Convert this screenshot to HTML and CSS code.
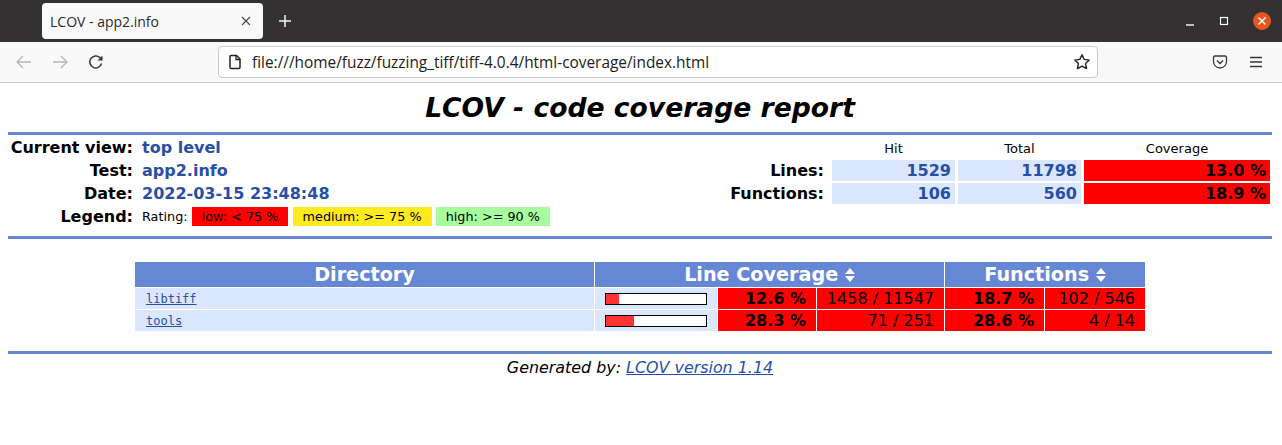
FILE: index.html
```html
<!DOCTYPE html>
<html lang="en">
<head>
    <meta charset="UTF-8">
    <title>LCOV - app2.info</title>
    <link rel="stylesheet" href="styles.css">
</head>
<body>
<div class="tabbar">
    <div class="tab">
        <span class="tab-title">LCOV - app2.info</span>
        <svg class="tab-close" width="10" height="10" viewBox="0 0 10 10"><path d="M1 1l8 8M9 1l-8 8" stroke="#444" stroke-width="1.1" fill="none"/></svg>
    </div>
    <svg class="new-tab" width="14" height="14" viewBox="0 0 14 14"><path d="M7 1v12M1 7h12" stroke="#f5f5f5" stroke-width="1.5" fill="none"/></svg>
    <div class="window-buttons">
        <svg width="10" height="10" viewBox="0 0 10 10"><path d="M1 9h8" stroke="#fff" stroke-width="1.4" fill="none"/></svg>
        <svg width="10" height="10" viewBox="0 0 10 10"><rect x="1.5" y="1.5" width="7" height="7" stroke="#fff" stroke-width="1.2" fill="none"/></svg>
        <div class="close-button">
            <svg width="10" height="10" viewBox="0 0 10 10"><path d="M1.5 1.5l7 7M8.500 1.5l-7 7" stroke="#fff" stroke-width="1.5" fill="none"/></svg>
        </div>
    </div>
</div>
<div class="toolbar">
    <div class="nav-buttons">
        <svg width="18" height="16" viewBox="0 0 18 16"><path d="M16 8H2M8 2L2 8l6 6" stroke="#b5b5b6" stroke-width="1.3" fill="none"/></svg>
        <svg width="18" height="16" viewBox="0 0 18 16"><path d="M2 8h14M10 2l6 6-6 6" stroke="#b5b5b6" stroke-width="1.3" fill="none"/></svg>
        <svg class="reload" width="16" height="16" viewBox="0 0 16 16"><path d="M13.600 9.500A6 6 0 1 1 12 3.600L14 6" stroke="#3a3a3c" stroke-width="1.5" fill="none"/><path d="M14.500 1.500V6.500H9.500z" fill="#3a3a3c"/></svg>
    </div>
    <div class="urlbar">
        <svg width="14" height="16" viewBox="0 0 14 16"><path d="M2 2.500A1 1 0 0 1 3 1.500H8.500L12 5V13.500A1 1 0 0 1 11 14.500H3A1 1 0 0 1 2 13.500Z" stroke="#222" stroke-width="1.5" fill="none"/><path d="M8 1.500V5.500H12" stroke="#222" stroke-width="1.3" fill="none"/></svg>
        <span class="url">file:///home/fuzz/fuzzing_tiff/tiff-4.0.4/html-coverage/index.html</span>
        <svg class="star" width="18" height="18" viewBox="0 0 18 18"><path d="M9 1.800l2.200 4.600 5 .7-3.600 3.500.9 5L9 13.200l-4.500 2.400.9-5L1.800 7.100l5-.7z" stroke="#222" stroke-width="1.4" stroke-linejoin="round" fill="none"/></svg>
    </div>
    <div class="tool-icons">
        <svg width="16" height="16" viewBox="0 0 16 16"><path d="M1.500 3.500A1.500 1.500 0 0 1 3 2H13A1.500 1.500 0 0 1 14.500 3.500V7.500A6.500 6.500 0 0 1 1.500 7.500Z" stroke="#3a3a3c" stroke-width="1.3" fill="none"/><path d="M5 6.500L8 9.500 11 6.500" stroke="#3a3a3c" stroke-width="1.5" fill="none"/></svg>
        <svg width="14" height="12" viewBox="0 0 14 12"><path d="M1 1.500h12M1 6h12M1 10.500h12" stroke="#3a3a3c" stroke-width="1.4" fill="none"/></svg>
    </div>
</div>

<div class="page">
    <h1 class="title">LCOV - code coverage report</h1>
    <div class="ruler"></div>

    <div class="summary">
        <table class="info">
            <tr><td class="head-item">Current view:</td><td class="head-value">top level</td></tr>
            <tr><td class="head-item">Test:</td><td class="head-value">app2.info</td></tr>
            <tr><td class="head-item">Date:</td><td class="head-value">2022-03-15 23:48:48</td></tr>
            <tr>
                <td class="head-item">Legend:</td>
                <td class="legend">
                    Rating:
                    <span class="rate rate-lo">low: &lt; 75 %</span>
                    <span class="rate rate-med">medium: &gt;= 75 %</span>
                    <span class="rate rate-hi">high: &gt;= 90 %</span>
                </td>
            </tr>
        </table>
        <table class="totals">
            <tr><th></th><th>Hit</th><th>Total</th><th>Coverage</th></tr>
            <tr><td class="head-item">Lines:</td><td class="cov-num">1529</td><td class="cov-num">11798</td><td class="cov-pct">13.0 %</td></tr>
            <tr><td class="head-item">Functions:</td><td class="cov-num">106</td><td class="cov-num">560</td><td class="cov-pct">18.9 %</td></tr>
        </table>
    </div>
    <div class="ruler"></div>

    <table class="files">
        <colgroup>
            <col class="col-dir">
            <col class="col-bar">
            <col class="col-pct">
            <col class="col-lines">
            <col class="col-fpct">
            <col class="col-funcs">
        </colgroup>
        <tr>
            <th>Directory</th>
            <th colspan="3">Line Coverage <svg class="sort" width="10" height="14" viewBox="0 0 10 14"><path d="M5 0l5 6H0zM5 14L0 8h10z" fill="#fff"/></svg></th>
            <th colspan="2">Functions <svg class="sort" width="10" height="14" viewBox="0 0 10 14"><path d="M5 0l5 6H0zM5 14L0 8h10z" fill="#fff"/></svg></th>
        </tr>
        <tr>
            <td class="file"><a href="#">libtiff</a></td>
            <td class="bar-cell"><div class="bar"><div class="fill" style="width: 12.6%"></div></div></td>
            <td class="pct">12.6 %</td>
            <td class="num">1458 / 11547</td>
            <td class="pct">18.7 %</td>
            <td class="num">102 / 546</td>
        </tr>
        <tr>
            <td class="file"><a href="#">tools</a></td>
            <td class="bar-cell"><div class="bar"><div class="fill" style="width: 28.3%"></div></div></td>
            <td class="pct">28.3 %</td>
            <td class="num">71 / 251</td>
            <td class="pct">28.6 %</td>
            <td class="num">4 / 14</td>
        </tr>
    </table>

    <div class="ruler ruler-foot"></div>
    <p class="footer">Generated by: <a href="#">LCOV version 1.14</a></p>
</div>
</body>
</html>
```

FILE: styles.css
```css
body {
    margin: 0;
    background-color: #fff;
    color: #000;
    font-family: "DejaVu Sans", sans-serif;
    font-size: 16px;
    overflow: hidden;
}
a {
    color: #284fa8;
}
table {
    border-collapse: separate;
}

/* browser frame */
.tabbar {
    display: flex;
    align-items: center;
    height: 42px;
    padding-left: 42px;
    background-color: #333132;
}
.tab {
    display: flex;
    align-items: center;
    justify-content: space-between;
    box-sizing: border-box;
    width: 221px;
    height: 36px;
    padding: 0 12px 0 8px;
    background-color: #f9f9fa;
    border-radius: 4px;
    font-family: "Open Sans", sans-serif;
    font-size: 14px;
    color: #2a2a2e;
}
.new-tab {
    margin-left: 15px;
}
.window-buttons {
    display: flex;
    align-items: center;
    gap: 24px;
    margin-left: auto;
    padding-right: 11px;
}
.close-button {
    display: flex;
    align-items: center;
    justify-content: center;
    width: 18px;
    height: 18px;
    border-radius: 50%;
    background-color: #e95420;
}
.toolbar {
    display: flex;
    align-items: center;
    box-sizing: border-box;
    height: 41px;
    padding: 0 19px 0 15px;
    background-color: #f9f9fa;
    border-bottom: 1px solid #ccc;
}
.nav-buttons {
    display: flex;
    align-items: center;
    gap: 18px;
    width: 203px;
}
.reload {
    margin-left: 1px;
}
.urlbar {
    display: flex;
    align-items: center;
    box-sizing: border-box;
    width: 880px;
    height: 32px;
    padding: 0 6px 0 9px;
    background-color: #fff;
    border: 1px solid #ccc;
    border-radius: 4px;
}
.url {
    margin-left: 10px;
    font-family: "Open Sans", sans-serif;
    font-size: 15.4px;
    color: #1c1b22;
}
.star {
    margin-left: auto;
}
.tool-icons {
    display: flex;
    align-items: center;
    gap: 21px;
    margin-left: auto;
}

/* report */
.page {
    padding: 0 10px 0 8px;
}
.title {
    margin: 0;
    padding: 8px 0 8px;
    font-size: 26.6px;
    font-style: italic;
    font-weight: bold;
    line-height: 33px;
    text-align: center;
}
.ruler {
    height: 3px;
    background-color: #6688d4;
}
.summary {
    display: flex;
    justify-content: space-between;
    height: 101px;
}
.info, .totals {
    align-self: flex-start;
}
.info {
    border-spacing: 0;
    margin-top: 1px;
}
.info td {
    height: 23px;
    padding: 0;
}
.head-item {
    font-weight: bold;
    text-align: right;
    white-space: nowrap;
}
.info .head-item {
    width: 125px;
    padding-right: 9px;
}
.head-value {
    color: #284fa8;
    font-weight: bold;
}
.legend {
    font-size: 12.8px;
    white-space: nowrap;
}
.rate {
    display: inline-block;
    height: 19px;
    line-height: 19px;
    padding: 0 10px;
}
.rate-lo { background-color: #ff0000; }
.rate-med { background-color: #ffea20; }
.rate-hi { background-color: #a7fc9d; }

.totals {
    border-spacing: 3px 2px;
    margin: 1px -1px 0 0;
}
.totals th {
    width: 123px;
    height: 20px;
    padding: 0;
    font-size: 13px;
    font-weight: normal;
}
.totals th:first-child {
    width: 93px;
}
.totals th:last-child {
    width: 186px;
}
.totals td {
    height: 21px;
    padding: 0 4px 0 0;
}
.totals .head-item {
    padding-right: 5px;
}
.cov-num {
    background-color: #dae7fe;
    color: #284fa8;
    font-weight: bold;
    text-align: right;
}
.cov-pct {
    background-color: #ff0000;
    font-weight: bold;
    text-align: right;
}

.files {
    width: 1012px;
    margin: 22px 0 0 126px;
    border-spacing: 1px;
    table-layout: fixed;
}
.col-dir { width: 459px; }
.col-bar { width: 122px; }
.col-pct { width: 98px; }
.col-lines { width: 127px; }
.col-fpct { width: 99px; }
.col-funcs { width: 100px; }
.files th {
    height: 25px;
    padding: 0;
    background-color: #6688d4;
    color: #fff;
    font-size: 19.2px;
    font-weight: bold;
}
.files td {
    height: 21px;
    padding: 0;
}
.sort {
    vertical-align: -1px;
}
.files .file {
    padding-left: 11px;
    background-color: #dae7fe;
    font-family: "DejaVu Sans Mono", monospace;
    font-size: 12px;
}
.bar-cell {
    background-color: #dae7fe;
}
.bar {
    box-sizing: border-box;
    width: 102px;
    height: 12px;
    margin: 1px 0 0 10px;
    background-color: #fff;
    border: 1px solid #000;
}
.fill {
    height: 100%;
    background-color: #ff3333;
}
.files .pct, .files .num {
    padding-right: 10px;
    background-color: #ff0000;
    text-align: right;
}
.pct {
    font-weight: bold;
}
.ruler-foot {
    margin-top: 19px;
}
.footer {
    margin: 4px 0 0;
    font-size: 15.9px;
    font-style: italic;
    text-align: center;
}
```
